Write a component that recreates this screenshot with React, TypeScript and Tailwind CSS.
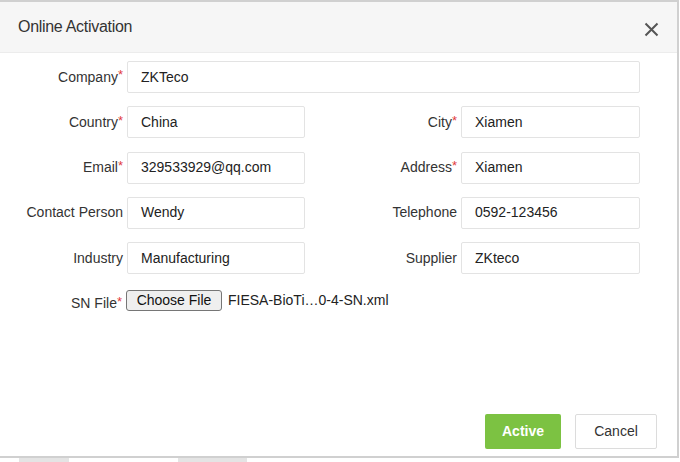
import React from 'react';

const font = "font-['Liberation_Sans',Arial,sans-serif]";

const Label = ({ text, required, className = '' }: { text: string; required?: boolean; className?: string }) => (
  <div className={`flex items-center justify-end pr-1 text-[14px] text-[#333] ${className}`}>
    {text}
    {required && <span className="text-[#e23c3c] text-[13px] -mt-1">*</span>}
  </div>
);

const Field = ({ value, className = '' }: { value: string; className?: string }) => (
  <div className={`h-8 flex items-center border border-[#e3e3e3] rounded-[2px] pl-[13px] text-[14px] text-[#222] bg-white ${className}`}>
    {value}
  </div>
);

const pairs: [string, boolean, string, string, boolean, string][] = [
  ['Country', true, 'China', 'City', true, 'Xiamen'],
  ['Email', true, '329533929@qq.com', 'Address', true, 'Xiamen'],
  ['Contact Person', false, 'Wendy', 'Telephone', false, '0592-123456'],
  ['Industry', false, 'Manufacturing', 'Supplier', false, 'ZKteco'],
];

export default function App() {
  return (
    <div className={`w-[680px] h-[462px] bg-white overflow-hidden ${font}`}>
      <div className="w-[679px] h-[458px] flex flex-col border-t-2 border-r-2 border-b-2 border-[#d0d0d0]">
        {/* header */}
        <div className="h-[51px] shrink-0 bg-[#f6f6f6] border-b border-[#ececec] flex items-center justify-between pl-[18px] pr-[18px]">
          <span className="text-[16px] text-[#333] tracking-[-0.3px]">Online Activation</span>
          <svg width="15" height="15" viewBox="0 0 15 15" className="mt-1">
            <path d="M1.5 1.5 13.5 13.5M13.5 1.5 1.5 13.5" stroke="#555" strokeWidth="2" />
          </svg>
        </div>

        {/* form */}
        <div className="flex-1 flex flex-col gap-[13.3px] pt-[8px]">
          <div className="flex items-center">
            <Label text="Company" required className="w-[127px]" />
            <Field value="ZKTeco" className="w-[513px]" />
          </div>
          {pairs.map(([l1, r1, v1, l2, r2, v2]) => (
            <div key={l1} className="flex items-center">
              <Label text={l1} required={r1} className="w-[127px]" />
              <Field value={v1} className="w-[178px]" />
              <Label text={l2} required={r2} className="w-[156px]" />
              <Field value={v2} className="w-[179px]" />
            </div>
          ))}
          <div className="flex items-center">
            <Label text="SN File" required className="w-[126px] pt-[6px]" />
            <div className="h-[21px] w-[96px] justify-center flex items-center bg-[#efefef] border border-[#767676] rounded-[3px] text-[14px] text-[#111]">
              Choose File
            </div>
            <span className="ml-[6px] text-[14px] text-[#222]">FIESA-BioTi…0-4-SN.xml</span>
          </div>
        </div>

        {/* footer */}
        <div className="flex justify-end gap-[14px] pr-[20px] pb-[7px]">
          <button className="w-[76px] h-[35px] rounded-[2px] bg-[#7cc242] text-white text-[14px] font-bold">Active</button>
          <button className="w-[82px] h-[35px] rounded-[2px] bg-white border border-[#dcdcdc] text-[#333] text-[14px]">Cancel</button>
        </div>
      </div>
      <div className="flex h-[4px]">
        <div className="ml-[19px] w-[50px] bg-[#e4e4e4]" />
        <div className="ml-[109px] w-[69px] bg-[#e4e4e4]" />
      </div>
    </div>
  );
}
